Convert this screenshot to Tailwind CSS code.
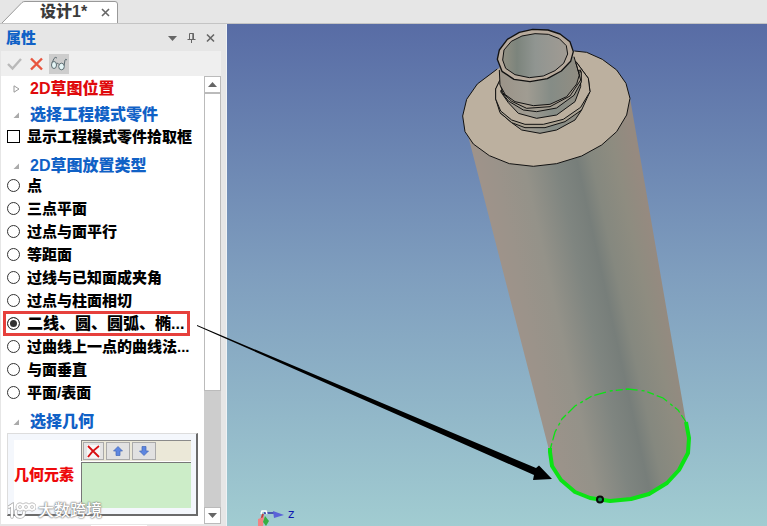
<!DOCTYPE html>
<html lang="zh-CN">
<head>
    <meta charset="UTF-8">
    <meta name="viewport" content="width=device-width, initial-scale=1.0">
    <title>设计1*</title>
    <script src="https://cdn.jsdelivr.net/npm/@tailwindcss/browser@4"></script>
</head>
<body class="bg-[#e6e6e6] overflow-hidden font-['Liberation_Sans','Noto_Sans_CJK_SC',sans-serif]">
    <div class="h-screen flex flex-col">
        <!-- Document tabs -->
        <header class="h-6 shrink-0 flex items-end border-b border-[#c4c4c4]">
            <div class="relative h-[22px] w-[118px] flex items-center pl-10 pr-2">
                <svg class="absolute inset-0 w-full h-full" viewBox="0 0 118 22" fill="none">
                    <path d="M2 22 L22 1.5 Q23 .5 25 .5 H115 Q117.500 .5 117.500 3 V22" fill="#fff" stroke="#999"/>
                </svg>
                <span class="relative text-base leading-none font-black text-[#3c3c3c]">设计1*</span>
                <button class="relative ml-auto size-[9px]" aria-label="关闭文档">
                    <svg class="size-full" viewBox="0 0 9 9" stroke="#666" stroke-width="1.6"><path d="M1 1l7 7M8 1l-7 7"/></svg>
                </button>
            </div>
        </header>

        <main class="flex-1 min-h-0 flex">
            <!-- Property panel -->
            <aside class="relative w-[227px] shrink-0 flex flex-col pr-[5px] pb-[2px] pl-px border-r border-[#eef2f5]">
                <div class="h-[27px] shrink-0 flex items-center pl-[5px] pr-[6px]">
                    <h1 class="text-[15px] leading-none font-black text-[#1061c6]">属性</h1>
                    <div class="ml-auto flex items-center gap-[10px] text-[#666]">
                        <button aria-label="菜单"><svg class="w-[9px] h-[10px]" viewBox="0 0 9 10"><path d="M0 3h9L4.500 8z" fill="#666"/></svg></button>
                        <button aria-label="固定"><svg class="w-[9px] h-[10px]" viewBox="0 0 9 10" fill="none" stroke="#666"><path d="M2.500 6V.5h4V6M5.800 0v6M.5 6.500h8M4.500 6.500V10"/></svg></button>
                        <button aria-label="关闭"><svg class="w-[9px] h-[10px]" viewBox="0 0 9 10" stroke="#666" stroke-width="1.6"><path d="M1 1.500l7 7M8 1.500l-7 7"/></svg></button>
                    </div>
                </div>
                <div class="h-[25px] shrink-0 flex items-center gap-2 bg-[#efefef] pl-[6px]">
                    <button aria-label="确定"><svg class="w-[15px] h-[14px]" viewBox="0 0 15 14" fill="none" stroke="#b9b9b9" stroke-width="2.4"><path d="M1 7l4.500 4.500L14 2"/></svg></button>
                    <button aria-label="取消"><svg class="w-[13px] h-[14px]" viewBox="0 0 13 14" fill="none" stroke="#e8553f" stroke-width="2.4"><path d="M1 1.500l11 11M12 1.500l-11 11"/></svg></button>
                    <button class="size-5 -ml-[2px] bg-[#cdcdcd]" aria-label="预览">
                        <svg class="size-5" viewBox="0 0 20 20" fill="none" stroke="#5c6b70">
                            <path d="M3 9L5 4.500q1-2 3-.5M15 12l1-6q.5-1.500 2 0M7.500 9.500q1.500-1 2.500 1"/>
                            <ellipse cx="5" cy="11" rx="2.500" ry="3.500" fill="#e4f5f6"/>
                            <ellipse cx="12.500" cy="12.500" rx="2.800" ry="3.300" fill="#e4f5f6"/>
                        </svg>
                    </button>
                </div>

                <div class="flex-1 min-h-0 flex">
                    <div class="flex-1 min-w-0 bg-white pt-[5px] pl-[6px] pr-[6px] text-[15px] leading-none font-black text-black whitespace-nowrap">
                        <h2 class="h-4 flex items-center gap-[10px] pl-[6px] text-base leading-none text-[#df0a0c]">
                            <svg class="w-[7px] h-2" viewBox="0 0 7 8" fill="none" stroke="#999"><path d="M1 .8L6 4 1 7.200z"/></svg>2D草图位置
                        </h2>
                        <h2 class="mt-[10px] h-4 flex items-center gap-[10px] pl-[6px] text-base leading-none text-[#1061c6]">
                            <svg class="w-[7px] h-2" viewBox="0 0 7 8"><path d="M6 1.500V7H.5z" fill="#aaa"/></svg>选择工程模式零件
                        </h2>
                        <label class="mt-[5px] h-4 flex items-center gap-[7px]">
                            <input type="checkbox" class="appearance-none size-[13px] shrink-0 border border-black bg-white">显示工程模式零件拾取框
                        </label>
                        <h2 class="mt-[14px] h-4 flex items-center gap-[10px] pl-[6px] text-base leading-none text-[#1061c6]">
                            <svg class="w-[7px] h-2" viewBox="0 0 7 8"><path d="M6 1.500V7H.5z" fill="#aaa"/></svg>2D草图放置类型
                        </h2>

                        <div>
                            <label class="h-[23px] flex items-center gap-[7px]"><input type="radio" name="place" class="appearance-none size-[13px] shrink-0 rounded-full border border-[#333] bg-white">点</label>
                            <label class="h-[23px] flex items-center gap-[7px]"><input type="radio" name="place" class="appearance-none size-[13px] shrink-0 rounded-full border border-[#333] bg-white">三点平面</label>
                            <label class="h-[23px] flex items-center gap-[7px]"><input type="radio" name="place" class="appearance-none size-[13px] shrink-0 rounded-full border border-[#333] bg-white">过点与面平行</label>
                            <label class="h-[23px] flex items-center gap-[7px]"><input type="radio" name="place" class="appearance-none size-[13px] shrink-0 rounded-full border border-[#333] bg-white">等距面</label>
                            <label class="h-[23px] flex items-center gap-[7px]"><input type="radio" name="place" class="appearance-none size-[13px] shrink-0 rounded-full border border-[#333] bg-white">过线与已知面成夹角</label>
                            <label class="h-[23px] flex items-center gap-[7px]"><input type="radio" name="place" class="appearance-none size-[13px] shrink-0 rounded-full border border-[#333] bg-white">过点与柱面相切</label>
                            <label class="relative h-[23px] flex items-center gap-[7px] text-base leading-none"><input type="radio" name="place" checked class="appearance-none size-[13px] shrink-0 rounded-full border border-[#333] bg-white checked:bg-[#333] checked:shadow-[inset_0_0_0_2px_#fff]">二线、圆、圆弧、椭...
                                <span class="absolute -inset-y-px -left-1 right-2 border-3 border-[#e6403c]"></span>
                            </label>
                            <label class="h-[23px] flex items-center gap-[7px]"><input type="radio" name="place" class="appearance-none size-[13px] shrink-0 rounded-full border border-[#333] bg-white">过曲线上一点的曲线法...</label>
                            <label class="h-[23px] flex items-center gap-[7px]"><input type="radio" name="place" class="appearance-none size-[13px] shrink-0 rounded-full border border-[#333] bg-white">与面垂直</label>
                            <label class="h-[23px] flex items-center gap-[7px]"><input type="radio" name="place" class="appearance-none size-[13px] shrink-0 rounded-full border border-[#333] bg-white">平面/表面</label>
                        </div>

                        <h2 class="mt-[10px] h-4 flex items-center gap-[10px] pl-[6px] text-base leading-none text-[#1061c6]">
                            <svg class="w-[7px] h-2" viewBox="0 0 7 8"><path d="M6 1.500V7H.5z" fill="#aaa"/></svg>选择几何
                        </h2>

                        <!-- Geometry list -->
                        <div class="mt-[3px] h-[83px] flex bg-[#f4f7fc] border border-t-[#ddd] border-l-[#ddd] border-r-2 border-b-2 border-r-[#6b6b6b] border-b-[#6b6b6b] p-[6px] pr-[5px]">
                            <div class="w-[67px] flex items-center bg-white text-[#ee0a0c]">几何元素</div>
                            <div class="flex-1 flex flex-col gap-px bg-white">
                                <div class="h-[21px] flex items-center gap-[2px] bg-[#ebe8d8] border-t border-l border-[#8a8a8a] pl-px">
                                    <button class="w-[21px] h-[18px] flex items-center justify-center border border-[#aaa] bg-[#e4e4e4]" aria-label="删除">
                                        <svg class="size-[13px]" viewBox="0 0 13 13" stroke="#d80f12" stroke-width="1.8"><path d="M0 0h13v13H0z" fill="#f6f6f6" stroke="none"/><path d="M1 1l11 11M12 1Q5 6 1 12" fill="none"/></svg>
                                    </button>
                                    <button class="w-6 h-[18px] flex items-center justify-center border border-[#aaa] bg-[#e1e1e1]" aria-label="上移">
                                        <svg class="w-[10px] h-[10px]" viewBox="0 0 10 10"><path d="M5 .5L9.500 5H7v4.500H3V5H.5z" fill="#5d86e0" stroke="#4468b8" stroke-width=".7"/></svg>
                                    </button>
                                    <button class="w-6 h-[18px] flex items-center justify-center border border-[#aaa] bg-[#e1e1e1]" aria-label="下移">
                                        <svg class="w-[10px] h-[10px]" viewBox="0 0 10 10"><path d="M5 9.500L9.500 5H7V.5H3V5H.5z" fill="#5d86e0" stroke="#4468b8" stroke-width=".7"/></svg>
                                    </button>
                                </div>
                                <div class="flex-1 bg-[#ccedc8] border-t border-l border-[#777]"></div>
                            </div>
                        </div>
                    </div>

                    <!-- Scrollbar -->
                    <div class="w-[17px] shrink-0 flex flex-col bg-[#cdcdcd]">
                        <button class="h-[17px] flex items-center justify-center bg-white border border-[#bbb]" aria-label="向上滚动"><svg class="w-[9px] h-[5px]" viewBox="0 0 9 5"><path d="M0 5h9L4.500 0z" fill="#666"/></svg></button>
                        <div class="h-[298px] bg-white border border-[#bbb]"></div>
                        <button class="mt-auto h-[17px] flex items-center justify-center bg-white border border-[#bbb]" aria-label="向下滚动"><svg class="w-[9px] h-[5px]" viewBox="0 0 9 5"><path d="M0 0h9L4.500 5z" fill="#666"/></svg></button>
                    </div>
                </div>

                <div class="absolute bottom-0 left-[91px] w-14 h-px bg-white"></div>

                <!-- Watermark -->
                <div class="absolute left-2 bottom-[6px] flex items-center gap-[2px]">
                    <svg class="w-7 h-[18px]" viewBox="0 0 28 18" fill="none" stroke-linecap="round">
                        <g stroke="#aaa" stroke-width="3.400"><path d="M1 5l3-2v12M8 9q-1 6 4 6 4 0 4-5"/><circle cx="12" cy="5" r="2.700"/><circle cx="18" cy="5" r="2.700"/><circle cx="24" cy="5" r="2.700"/></g>
                        <g stroke="#fff" stroke-width="2"><path d="M1 5l3-2v12M8 9q-1 6 4 6 4 0 4-5"/><circle cx="12" cy="5" r="2.700"/><circle cx="18" cy="5" r="2.700"/><circle cx="24" cy="5" r="2.700"/></g>
                    </svg>
                    <span class="text-base leading-none font-medium text-white [text-shadow:0_0_1px_#777,0_0_2px_#888,0_0_2px_#999]">大数跨境</span>
                </div>
            </aside>

            <!-- 3D viewport -->
            <section class="flex-1 min-w-0 bg-linear-to-b from-[#586ca5] via-[#7f9ebe] to-[#a1ccd1]">
                <svg class="relative block w-full h-full overflow-visible" viewBox="227 24 540 502" preserveAspectRatio="xMinYMin meet">
                    <defs>
                        <linearGradient id="body" gradientUnits="userSpaceOnUse" x1="439" y1="0" x2="602" y2="0" gradientTransform="skewX(12.400)">
                            <stop offset="0" stop-color="#9f938a"/>
                            <stop offset=".12" stop-color="#9b938a"/>
                            <stop offset=".3" stop-color="#949289"/>
                            <stop offset=".5" stop-color="#7f8580"/>
                            <stop offset=".63" stop-color="#777e7a"/>
                            <stop offset=".72" stop-color="#85887f"/>
                            <stop offset=".87" stop-color="#8e8c80"/>
                            <stop offset="1" stop-color="#968a80"/>
                        </linearGradient>
                        <linearGradient id="neck">
                            <stop offset="0" stop-color="#9b9388"/>
                            <stop offset=".35" stop-color="#a09c92"/>
                            <stop offset=".65" stop-color="#858c86"/>
                            <stop offset="1" stop-color="#918d82"/>
                        </linearGradient>
                        <linearGradient id="bore">
                            <stop offset="0" stop-color="#929083"/>
                            <stop offset=".22" stop-color="#7c847c"/>
                            <stop offset=".5" stop-color="#909591"/>
                            <stop offset="1" stop-color="#a19b93"/>
                        </linearGradient>
                    </defs>

                    <!-- bottle body -->
                    <path d="M463 116L549 450L552 466L561 480L575 492L590 498L610 502L631 500L649 494L667 483L679 470L688 453L690 438L686 422L630 98z" fill="url(#body)"/>

                    <g transform="translate(440 20) scale(.3333)" fill="none" stroke="#111" stroke-width="3" stroke-linejoin="round">
                        <!-- shoulder -->
                        <path d="M403 93L440 97L487 118L530 150L558 190L570 235L560 285L530 335L485 375L425 408L350 431L280 439L208 431L148 407L100 372L75 335L68 288L80 238L112 192L172 147L280 110z" fill="#bcb09f" stroke="none"/>
                        <path d="M403 93L440 97L487 118L530 150L558 190L570 235L560 285L530 335L485 375L425 408L350 431L280 439L208 431L148 407L100 372L75 335L68 288L80 238L112 192L172 147"/>
                        <!-- flange and thread -->
                        <path d="M180 278L215 308L245 330L300 340L350 330L405 300L425 270z" fill="url(#neck)"/>
                        <path d="M180 180L167 207L167 237L180 278L215 308L255 323L315 323L375 305L425 270L450 215L445 175L408 125z" fill="#aaa292"/>
                        <path d="M180 180L167 207L167 237L182 273L215 300L255 313L310 313L370 298L422 262L450 215L445 175L408 125z" fill="#bcb09f"/>
                        <path d="M182 215L205 248L235 280L290 295L350 285L405 245L422 200V150z" fill="url(#neck)"/>
                        <path d="M182 212L205 243L250 270L290 275L350 264L402 226L424 186V155z" fill="#a19c90"/>
                        <path d="M180 190L188 218L215 244L260 265L330 260L390 228L422 180L408 130z" fill="#aaa092"/>
                        <path d="M178 140L180 195L196 224L225 245L280 257L330 253L380 230L410 192L416 170L402 110z" fill="url(#neck)" stroke="none"/>
                        <path d="M178 150L180 195L196 224L225 245L280 257L330 253L380 230L410 192L418 165L402 110"/>
                        <!-- mouth -->
                        <path d="M172 118L178 90L202 58L238 37L278 28L324 30L360 42L390 65L400 95L392 124L364 153L322 176L270 185L222 178L186 154z" fill="#b7aa9c" stroke-width="4"/>
                        <path d="M188 120L192 90L214 64L246 48L285 41L325 43L358 56L379 77L383 102L371 130L345 152L310 168L268 173L225 164L197 145z" fill="url(#bore)"/>
                    </g>

                    <!-- selected base edge -->
                    <g fill="none" stroke="#0be314">
                        <path d="M550 450L555 432L562 419L575 406L592 396L610 391L628 389L645 391L663 398L678 410L686 422" stroke-width="1.300" stroke-dasharray="7 3 12 4 3 3"/>
                        <path d="M550 448V452L552 466L561 480L575 492L590 498L610 501L631 499L649 494L667 483L679 470L688 453L689 438L686 422" stroke-width="4" stroke-linejoin="round"/>
                    </g>
                    <circle cx="600" cy="499.500" r="3" fill="#168a50" stroke="#0a0a0a" stroke-width="2"/>

                    <!-- callout arrow -->
                    <path d="M197 325L536 468L539 465.500L552 479L533 480L534 475L197 326z" fill="#000"/>

                    <!-- axis triad -->
                    <path d="M264 513h11" stroke="#2b32a8" stroke-width="1.500"/>
                    <path d="M273 511l11 4-10 3z" fill="#5a62d8"/>
                    <path d="M263 514l-2 7" stroke="#c43c3c" stroke-width="2"/>
                    <path d="M258 519l6-2-1 9h-5z" fill="#f08484"/>
                    <path d="M265 516l4 5-3 5-3-4z" fill="#35b042"/>
                    <path d="M261 514l1-3h4l1 3" fill="none" stroke="#fff" stroke-width="1.500"/>
                    <text x="288" y="518" font-size="12" font-family="DejaVu Sans, sans-serif" fill="#1018b0">z</text>
                </svg>
            </section>
        </main>
    </div>
</body>
</html>
